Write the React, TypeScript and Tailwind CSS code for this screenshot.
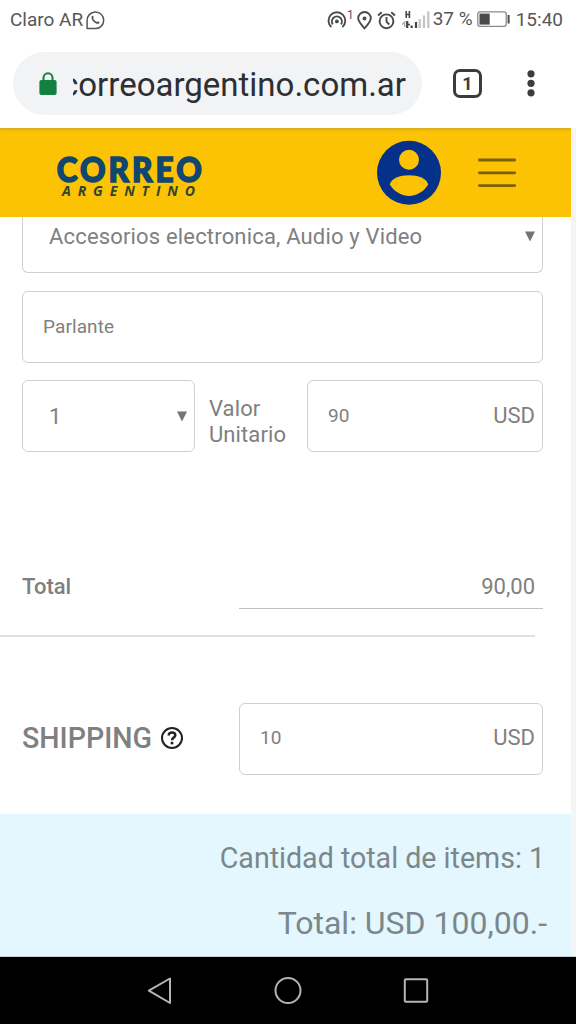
import React from 'react';

// ---------- Iconos de la barra de estado ----------

const WhatsappIcon = () => (
  <svg width="19" height="19" viewBox="0 0 19 19" fill="none" stroke="#555" strokeWidth="1.5">
    <path d="M1.1 17.6V9.6A8.3 8.3 0 1 1 9.4 17.6Z" strokeLinejoin="round" />
    <path
      d="M5.7 5.2c.8-1 1.5-.6 1.9.6.3.8-.5 1.2-.3 1.7.7 1.6 1.8 2.7 3.4 3.4.6.2 1-.8 1.6-.5 1.6.7 1.7 1.2.7 2-2.8 2-8.7-3.6-7.3-7.2Z"
      fill="#555"
      stroke="none"
    />
  </svg>
);

const HotspotIcon = () => (
  <svg width="20" height="19" viewBox="0 0 20 19" fill="none" stroke="#4a4a4a" strokeWidth="1.9">
    <path d="M4.4 16A8.4 8.4 0 1 1 15.4 16" />
    <path d="M5.8 13.4A5 5 0 1 1 14 13.4" />
    <circle cx="9.9" cy="10.4" r="1.9" fill="#4a4a4a" stroke="none" />
  </svg>
);

const PinIcon = () => (
  <svg width="15" height="19" viewBox="0 0 15 19" fill="none" stroke="#4a4a4a" strokeWidth="1.9">
    <path d="M7.5 17.3C4.3 13.5 1.2 10.4 1.2 7.2a6.3 6.2 0 0 1 12.6 0C13.8 10.4 10.7 13.5 7.5 17.3Z" />
    <circle cx="7.5" cy="7.5" r="1.9" fill="#4a4a4a" stroke="none" />
  </svg>
);

const AlarmIcon = () => (
  <svg width="19" height="19" viewBox="0 0 19 19" fill="none" stroke="#4a4a4a" strokeWidth="1.9">
    <circle cx="9.5" cy="10.3" r="6.9" />
    <path d="M9.5 6v4.6l2.8 2.9M1 4.500 4.700 1.300M18 4.500 14.300 1.300" />
  </svg>
);

const SignalIcon = () => (
  <svg width="28" height="20" viewBox="0 0 28 20">
    <path d="M4.200 1v7M7.400 1v7M4.200 4.500h3.200" stroke="#444" strokeWidth="1.6" />
    <path d="M0 14.700 2.700 12v5" stroke="#aaa" strokeWidth="1.3" fill="none" />
    <path d="M5.200 11v7M9.600 15.500V18M14 12v6" stroke="#444" strokeWidth="2.2" />
    <path d="M5 14.500h3" stroke="#444" strokeWidth="1.5" />
    <path d="M17.700 9v9M22 5.500V18M26.300 1.500V18" stroke="#c4c4c4" strokeWidth="2.3" />
  </svg>
);

const BatteryIcon = () => (
  <svg width="34" height="17" viewBox="0 0 34 17">
    <rect x="0.8" y="0.9" width="28.4" height="14.4" rx="2" fill="none" stroke="#8a8a8a" strokeWidth="1.3" />
    <rect x="2.5" y="2.6" width="10.2" height="11" fill="#4a4a4a" />
    <path d="M31.6 4v8.5" stroke="#4a4a4a" strokeWidth="2" />
  </svg>
);

const StatusBar: React.FC = () => (
  <div className="flex h-10 items-center justify-between pr-[13px] pl-[10px] text-[19px] text-[#575757]">
    <div className="flex items-center gap-[3px]">
      <span>Claro AR</span>
      <WhatsappIcon />
    </div>
    <div className="flex items-center">
      <HotspotIcon />
      <span className="mr-[3px] -mt-2.5 text-[12px]">1</span>
      <PinIcon />
      <span className="ml-[5px]"><AlarmIcon /></span>
      <span className="ml-[6px]"><SignalIcon /></span>
      <span className="ml-[3px] -mt-[1px] whitespace-nowrap">37 %</span>
      <span className="ml-[4px] -mt-[2px]"><BatteryIcon /></span>
      <span className="ml-[5px]">15:40</span>
    </div>
  </div>
);

// ---------- Barra del navegador ----------

const BrowserBar: React.FC = () => (
  <div className="flex h-[88px] items-start pt-3">
    <div className="ml-[13px] flex h-[63px] w-[409px] items-center rounded-full bg-[#f1f3f4] pl-[26px]">
      <svg width="18" height="24" viewBox="0 0 18 24">
        <path d="M4.5 9V5.8a4.500 4.500 0 0 1 9 0V9" fill="none" stroke="#128040" strokeWidth="2" />
        <rect x="0.4" y="8" width="17.2" height="15" rx="2" fill="#128040" />
      </svg>
      {/* La URL se recorta por la izquierda cuando no entra */}
      <div className="mt-[3px] ml-4 flex w-[333px] justify-end overflow-hidden text-[33px] leading-10 whitespace-nowrap text-[#2d2f32]">
        <span>correoargentino.com.ar</span>
      </div>
    </div>
    <div className="mt-[17px] ml-[31px] flex h-[29px] w-[29px] items-center justify-center rounded-[7px] border-3 border-[#3c3c3c] text-[18px] font-bold text-[#3c3c3c]">
      1
    </div>
    <svg className="mt-[17px] ml-[44px]" width="10" height="29" viewBox="0 0 10 29" fill="#3c3c3c">
      <circle cx="5" cy="4.8" r="3.6" />
      <circle cx="5" cy="14.3" r="3.6" />
      <circle cx="5" cy="23.8" r="3.6" />
    </svg>
  </div>
);

// ---------- Encabezado del sitio ----------

const SiteHeader: React.FC = () => (
  <header className="flex h-[89px] items-start bg-[#fcc304] shadow-[inset_0_4px_3px_-2px_#d9ab1c]">
    <svg className="mt-[14px] ml-[55px]" width="150" height="60" viewBox="0 0 150 60">
      <text x="2" y="40" textLength="161" transform="scale(0.9 1)" className="font-[Lato] text-[35px] font-black" fill="#10466f" stroke="#10466f" strokeWidth="1.6">
        CORREO
      </text>
      <text x="7" y="54" textLength="133" className="font-['Open_Sans'] text-[14px] font-bold italic" fill="#2f4531">
        ARGENTINO
      </text>
    </svg>
    <svg className="mt-[12px] ml-[171px]" width="66" height="66" viewBox="0 0 66 66">
      <circle cx="33" cy="32.8" r="32" fill="#06318a" />
      <circle cx="33" cy="19.8" r="10" fill="#fcc304" />
      <path d="M13.8 44.600C15 38.500 24 35.300 33 35.300S51 38.500 52.200 44.600C48.500 51 41 56 33 56S17.500 51 13.800 44.600Z" fill="#fcc304" />
    </svg>
    <svg className="mt-[29px] ml-[35px]" width="40" height="32" viewBox="0 0 40 32" stroke="#805f0a" strokeWidth="2.8" strokeLinecap="round">
      <path d="M2.300 3h35.400M2.300 15.800h35.400M2.300 28.600h35.400" />
    </svg>
  </header>
);

const Caret = () => (
  <svg width="10" height="11" viewBox="0 0 10 11">
    <path d="M0 0.500h10L5 10.500Z" fill="#757575" />
  </svg>
);

interface MoneyFieldProps {
  value: string;
  className: string;
}

const MoneyField: React.FC<MoneyFieldProps> = ({ value, className }) => (
  <div className={`flex h-[72px] items-center justify-between rounded-[6px] border-[1.5px] border-[#d0d0d0] pr-[7px] pl-5 ${className}`}>
    <span className="text-[19px]">{value}</span>
    <span className="-mt-[2px] text-[22px]">USD</span>
  </div>
);

const App: React.FC = () => {
  return (
    <div className="flex h-[1024px] w-[576px] flex-col overflow-hidden bg-white font-[Roboto,sans-serif] text-[#808080]">
      <StatusBar />
      <BrowserBar />

      <div className="h-[828px] bg-[#f5f5f5]">
        <div className="flex h-full w-[571px] flex-col bg-white">
          <SiteHeader />

          <main className="flex h-[597px] flex-col">
            <div className="ml-[22px] flex h-14 w-[521px] items-start justify-between rounded-b-[6px] border-[1.5px] border-t-0 border-[#d0d0d0] pr-[7px] pl-[26px]">
              <span className="mt-[4px] text-[22px] leading-8 tracking-[0.17px]">Accesorios electronica, Audio y Video</span>
              <span className="mt-[14px]"><Caret /></span>
            </div>

            <div className="mt-[18px] ml-[22px] flex h-[72px] w-[521px] items-center rounded-[6px] border-[1.5px] border-[#d0d0d0] pl-5 text-[19px] tracking-[0.1px]">
              Parlante
            </div>

            <div className="mt-[17px] ml-[22px] flex h-[72px] w-[521px] items-center">
              <div className="flex h-[72px] w-[173px] items-center justify-between rounded-[6px] border-[1.5px] border-[#d0d0d0] pr-[7px] pl-[26px] text-[22px]">
                <span>1</span>
                <Caret />
              </div>
              <div className="mt-[12px] ml-[14px] w-[98px] text-[22px] leading-[26px] tracking-[0.1px]">
                Valor
                <br />
                Unitario
              </div>
              <MoneyField value="90" className="w-[236px]" />
            </div>

            <div className="mt-[112px] ml-[22px] flex w-[521px] justify-between text-[22px]">
              <span className="pt-[6px] font-medium">Total</span>
              <span className="h-[45px] w-[304px] border-b-[1.5px] border-[#c0c0c0] pt-[6px] pr-2 text-right">90,00</span>
            </div>
            <div className="mt-[26px] h-[1.5px] w-[535px] bg-[#e0e0e0]" />

            <div className="mt-[66px] ml-[22px] flex w-[521px] items-center justify-between">
              <div className="flex items-center">
                <span className="text-[28.6px] font-medium">SHIPPING</span>
                <svg className="ml-[8px]" width="24" height="24" viewBox="0 0 24 24" fill="none" stroke="#222">
                  <circle cx="12" cy="12" r="10" strokeWidth="2" />
                  <path d="M8.700 9.600C8.700 7.500 10 6.600 12 6.600c2 0 3.300 1 3.300 2.700 0 2.200-3.300 2.400-3.300 5" strokeWidth="2.5" />
                  <circle cx="12" cy="17" r="1.5" fill="#222" stroke="none" />
                </svg>
              </div>
              <MoneyField value="10" className="w-[304px]" />
            </div>
          </main>

          <footer className="flex flex-1 flex-col items-end bg-[#e4f6fe] pt-[24px] text-[#7b878b]">
            <div className="pr-[26px] text-[28.6px] leading-10">Cantidad total de items: 1</div>
            <div className="mt-[25px] pr-[24px] text-[32px] leading-10">Total: USD 100,00.-</div>
          </footer>
        </div>
      </div>

      {/* Botones del sistema */}
      <nav className="flex h-[68px] items-center justify-center gap-[100px] border-t border-[#c5ced2] bg-black">
        <svg width="28" height="28" viewBox="0 0 28 28" fill="none" stroke="#b5b5b5" strokeWidth="2">
          <path d="M24 1.500V26L2.800 13.700Z" strokeLinejoin="round" />
        </svg>
        <svg width="28" height="28" viewBox="0 0 28 28" fill="none" stroke="#b5b5b5" strokeWidth="2">
          <circle cx="14" cy="13.5" r="12.5" />
        </svg>
        <svg width="28" height="28" viewBox="0 0 28 28" fill="none" stroke="#b5b5b5" strokeWidth="2">
          <rect x="2.8" y="2.3" width="22.4" height="22.4" rx="1" />
        </svg>
      </nav>
    </div>
  );
};

export default App;
